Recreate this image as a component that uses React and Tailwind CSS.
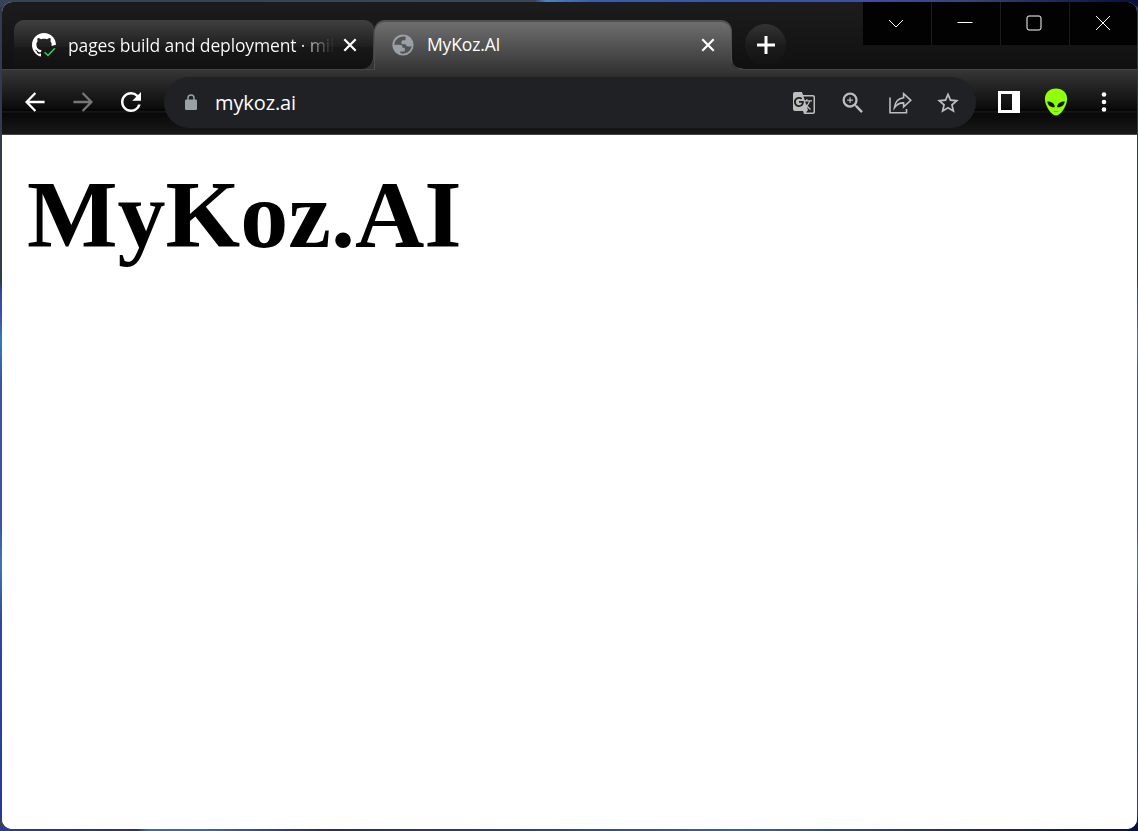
import React from "react";
import { MdGTranslate, MdZoomIn, MdStarBorder, MdRefresh } from "react-icons/md";

function GithubSuccess() {
  return (
    <svg className="h-6 w-6 shrink-0" viewBox="0 0 24 24" fill="none">
      <defs>
        <mask id="status-cut">
          <rect width="24" height="24" fill="white" />
          <path d="M9.5 17.5L14 14.5L24 11.8V24H11Z" fill="black" />
        </mask>
      </defs>
      <g mask="url(#status-cut)">
        <path
          fill="white"
          transform="scale(1.5)"
          d="M8 0C3.58 0 0 3.58 0 8c0 3.54 2.29 6.53 5.47 7.59.4.07.55-.17.55-.38 0-.19-.01-.82-.01-1.49-2.01.37-2.53-.49-2.69-.94-.09-.23-.48-.94-.82-1.13-.28-.15-.68-.52-.01-.53.63-.01 1.08.58 1.23.82.72 1.21 1.87.87 2.33.66.07-.52.28-.87.51-1.07-1.78-.2-3.64-.89-3.64-3.95 0-.87.31-1.59.82-2.15-.08-.2-.36-1.02.08-2.12 0 0 .67-.21 2.2.82.64-.18 1.32-.27 2-.27s1.36.09 2 .27c1.53-1.04 2.2-.82 2.2-.82.44 1.1.16 1.92.08 2.12.51.56.82 1.27.82 2.15 0 3.07-1.87 3.75-3.65 3.95.29.25.54.73.54 1.48 0 1.07-.01 1.93-.01 2.2 0 .21.15.46.55.38A8.01 8.01 0 0 0 16 8c0-4.42-3.58-8-8-8"
        />
      </g>
      <path d="M12.6 19.2L16 22.4L22.8 15.3" stroke="#2bd34f" strokeWidth="1.5" />
    </svg>
  );
}

function Globe() {
  return (
    <svg className="h-[22px] w-[22px] shrink-0" viewBox="0 0 22 22">
      <circle cx="11" cy="11" r="10.6" fill="#9aa0a6" />
      <path
        fill="#535456"
        d="M13.6 2.7C8 1.2 2.6 5.2 2.3 10.8h5.5c1.7 0 2.7 1 2.7 2.2v.8h2.3v2.4c0 .8-.6 1.2-1.4 1.2H8.3v1.9c5.5 1.6 10.8-2.2 11.3-7.6-.9.7-2 .8-3.4.8-1.7 0-2.5-.9-2.5-2.2H9.5V7.9c0-1.1.7-1.7 1.8-1.7h1.1c.8 0 1.2-.5 1.2-1.3z"
      />
    </svg>
  );
}

function BackArrow() {
  return (
    <svg className="h-5 w-5" viewBox="0 0 20 20" fill="none" stroke="currentColor" strokeWidth="2.3">
      <path d="M19.6 10H2M10.4 1L1.6 10L10.4 19" />
    </svg>
  );
}

function Lock() {
  return (
    <svg className="h-4 w-3" viewBox="0 0 12 16">
      <path d="M3 7V4A3 3 0 0 1 9 4V7" fill="none" stroke="#9aa0a6" strokeWidth="1.5" />
      <rect y="5.5" width="12" height="10.5" rx="1.3" fill="#9aa0a6" />
    </svg>
  );
}

function TabClose() {
  return (
    <svg className="h-3.5 w-3.5 shrink-0" viewBox="0 0 14 14" stroke="white" strokeWidth="2.2">
      <path d="M1.3 1.3L12.7 12.7M12.7 1.3L1.3 12.7" />
    </svg>
  );
}

function ShareIcon() {
  return (
    <svg className="h-6 w-6" viewBox="0 0 24 24" fill="none" stroke="#bdbdbd" strokeWidth="1.6">
      <path d="M2 6.5V21.700H18.500V18" />
      <path d="M15.600 2.700L22.800 9.300L15.600 15.900V11.900C11.800 11.700 9 13.100 6.400 16.800C7 11.100 10 7.300 15.600 6.700Z" />
    </svg>
  );
}

function Alien() {
  return (
    <svg className="h-7 w-6" viewBox="0 0 24 28">
      <path d="M12 .4C5.2.4.9 4.8.9 11c0 7 6.6 16.6 11.1 16.6S23.1 18 23.1 11C23.1 4.8 18.8.4 12 .4Z" fill="#91ff0a" />
      <path d="M3.3 13.6C7.5 13.3 11 15.7 10.8 19.3C6.8 19.8 3.6 17.4 3.3 13.6ZM20.7 13.6C16.5 13.3 13 15.7 13.2 19.3C17.2 19.8 20.4 17.4 20.7 13.6Z" fill="#10160c" />
      <path d="M9.8 23.3Q12 24.2 14.2 23.3" stroke="#68b80a" fill="none" />
    </svg>
  );
}

function WindowButton({ children, last }) {
  return (
    <div className={last ? "flex h-[43px] w-[67px] items-center justify-center bg-[#020202] pr-0.5 pb-0.5" : "flex h-[43px] w-[69px] items-center justify-center border-r border-[#1b1b1b] bg-[#020202] pr-0.5 pb-0.5"}>
      <svg className="h-4 w-4" viewBox="0 0 16 16" fill="none" stroke="white" strokeWidth="1">
        {children}
      </svg>
    </div>
  );
}

export default function App() {
  return (
    <div className="h-[831px] w-[1138px] overflow-hidden bg-[linear-gradient(90deg,#34435a_0%,#36465e_47%,#4b83c5_48%,#395bb5_52%,#3b50ad_75%,#35447d_85%,#07103b_100%)]">
      <div className="h-full w-full bg-[linear-gradient(180deg,transparent_0%,transparent_6px,#303b4e_7px,#303b50_34%,#3346aa_35%,#3b50b5_38%,#337bb7_41%,#3c51ad_46%,#3c51ad_63%,#3979b1_68%,#3145a5_75%,#2338a5_98%,transparent_99%)]">
        <div className="h-full w-full bg-[linear-gradient(90deg,#2a3a9b_0%,#2c3268_12%,#3070aa_13%,#316cac_18%,#303b88_25%,#302d53_29%,#2b3f82_45%,#2b66a4_65%,#2b2750_87%,#061149_100%)] bg-[length:100%_3px] bg-bottom bg-no-repeat px-[2px] pt-[2px] pr-px pb-[2px]">
          <div className="flex h-full w-full flex-col overflow-hidden rounded-[10px] bg-white">
            <header className="flex h-[67px] shrink-0 justify-between bg-[linear-gradient(#1c1c1c,#161616_55%,#101010)]">
              <div className="flex pt-[18px] pl-3">
                <div className="w-[360px] bg-[linear-gradient(#1a1a1a,#3a3a3a_60%,#333)] bg-[length:20px_100%] bg-right bg-no-repeat">
                  <div className="flex h-[49px] items-center rounded-t-[10px] rounded-br-[12px] border-r border-[#424242] bg-[linear-gradient(#404040,#1e1e1e_54%,#181818_56%,#111)] pl-[18px]">
                    <GithubSuccess />
                    <span className="ml-3 w-[266px] whitespace-nowrap bg-[linear-gradient(90deg,white_87%,#ffffff10_99%)] bg-clip-text font-['Open_Sans',sans-serif] text-[17.5px] leading-6 tracking-[-0.13px] text-transparent">
                      pages build and deployment · mil
                    </span>
                    <span className="ml-[9px]"><TabClose /></span>
                  </div>
                </div>
                <div className="relative w-[358px]">
                  <div className="flex h-[50px] items-center rounded-t-[11px] border-x border-t-2 border-[#505050] bg-[linear-gradient(#717171,#363636)] bg-origin-border pb-[3px] pl-[17px]">
                    <Globe />
                    <span className="ml-[13px] w-[274px] pb-px font-['Open_Sans',sans-serif] text-[17.5px] leading-6 tracking-[-0.15px] text-white">MyKoz.AI</span>
                    <TabClose />
                  </div>
                  <svg className="absolute top-[38px] left-[357px] h-3 w-3" viewBox="0 0 12 12">
                    <path d="M0 0Q0 11.5 12 11.5V12H0Z" fill="#383838" />
                    <path d="M.5 0Q.5 11 12 11" fill="none" stroke="#4c4c4c" />
                  </svg>
                </div>
                <div className="mt-[4px] ml-[13px] flex h-[41px] w-[41px] items-center justify-center rounded-full bg-[linear-gradient(#333,#1b1b1b_55%,#121212)]">
                  <svg className="h-[18px] w-[18px]" viewBox="0 0 18 18" stroke="white" strokeWidth="3">
                    <path d="M0 9H18M9 0V18" />
                  </svg>
                </div>
              </div>
              <div className="flex">
                <WindowButton><path d="M1 5L8 12L15 5" /></WindowButton>
                <WindowButton><path d="M.5 7.5H15.5" /></WindowButton>
                <WindowButton><rect x="1" y="1" width="14" height="14" rx="2" /></WindowButton>
                <WindowButton last><path d="M1 1L15 15M15 1L1 15" /></WindowButton>
              </div>
            </header>
            <nav className="flex h-[66px] shrink-0 items-center border-y border-[#444] bg-[linear-gradient(#363636_0,#282828_12px,#0b0b0b_39px,#000_40px,#1c1c1c_42px,#080808_43px,#181818_64px)]">
              <span className="ml-[23px] text-white"><BackArrow /></span>
              <span className="ml-[28px] rotate-180 text-[#777]"><BackArrow /></span>
              <MdRefresh className="ml-[23px] h-[30px] w-[30px] text-white" />
              <div className="ml-[18px] flex h-[51px] w-[812px] items-center rounded-full bg-[#202124] pl-[21px]">
                <Lock />
                <span className="ml-[18px] w-[577px] pt-px font-['Open_Sans',sans-serif] text-[20px] leading-7 tracking-[-0.1px] text-white">mykoz.ai</span>
                <div className="flex items-center pt-[2px] text-[#bdbdbd]">
                  <MdGTranslate className="h-6 w-6" />
                  <MdZoomIn className="ml-[23px] h-7 w-7" />
                  <span className="ml-[21px]"><ShareIcon /></span>
                  <MdStarBorder className="ml-[23px] h-[26px] w-[26px]" />
                </div>
              </div>
              <svg className="ml-[22px] h-[22px] w-[22px]" viewBox="0 0 22 22">
                <path d="M0 0H22V22H0ZM3 3V19H14V3Z" fill="white" fillRule="evenodd" />
              </svg>
              <div className="ml-[24px]"><Alien /></div>
              <svg className="ml-[33px] h-5 w-[6px]" viewBox="0 0 6 20" fill="white">
                <circle cx="3" cy="2.5" r="2.3" />
                <circle cx="3" cy="10" r="2.3" />
                <circle cx="3" cy="17.5" r="2.3" />
              </svg>
            </nav>
            <main className="flex-1 bg-white pt-[24px] pl-[25px]">
              <h1 className="font-['Liberation_Serif',serif] text-[96px] leading-[111px] font-bold text-black">MyKoz.AI</h1>
            </main>
          </div>
        </div>
      </div>
    </div>
  );
}
